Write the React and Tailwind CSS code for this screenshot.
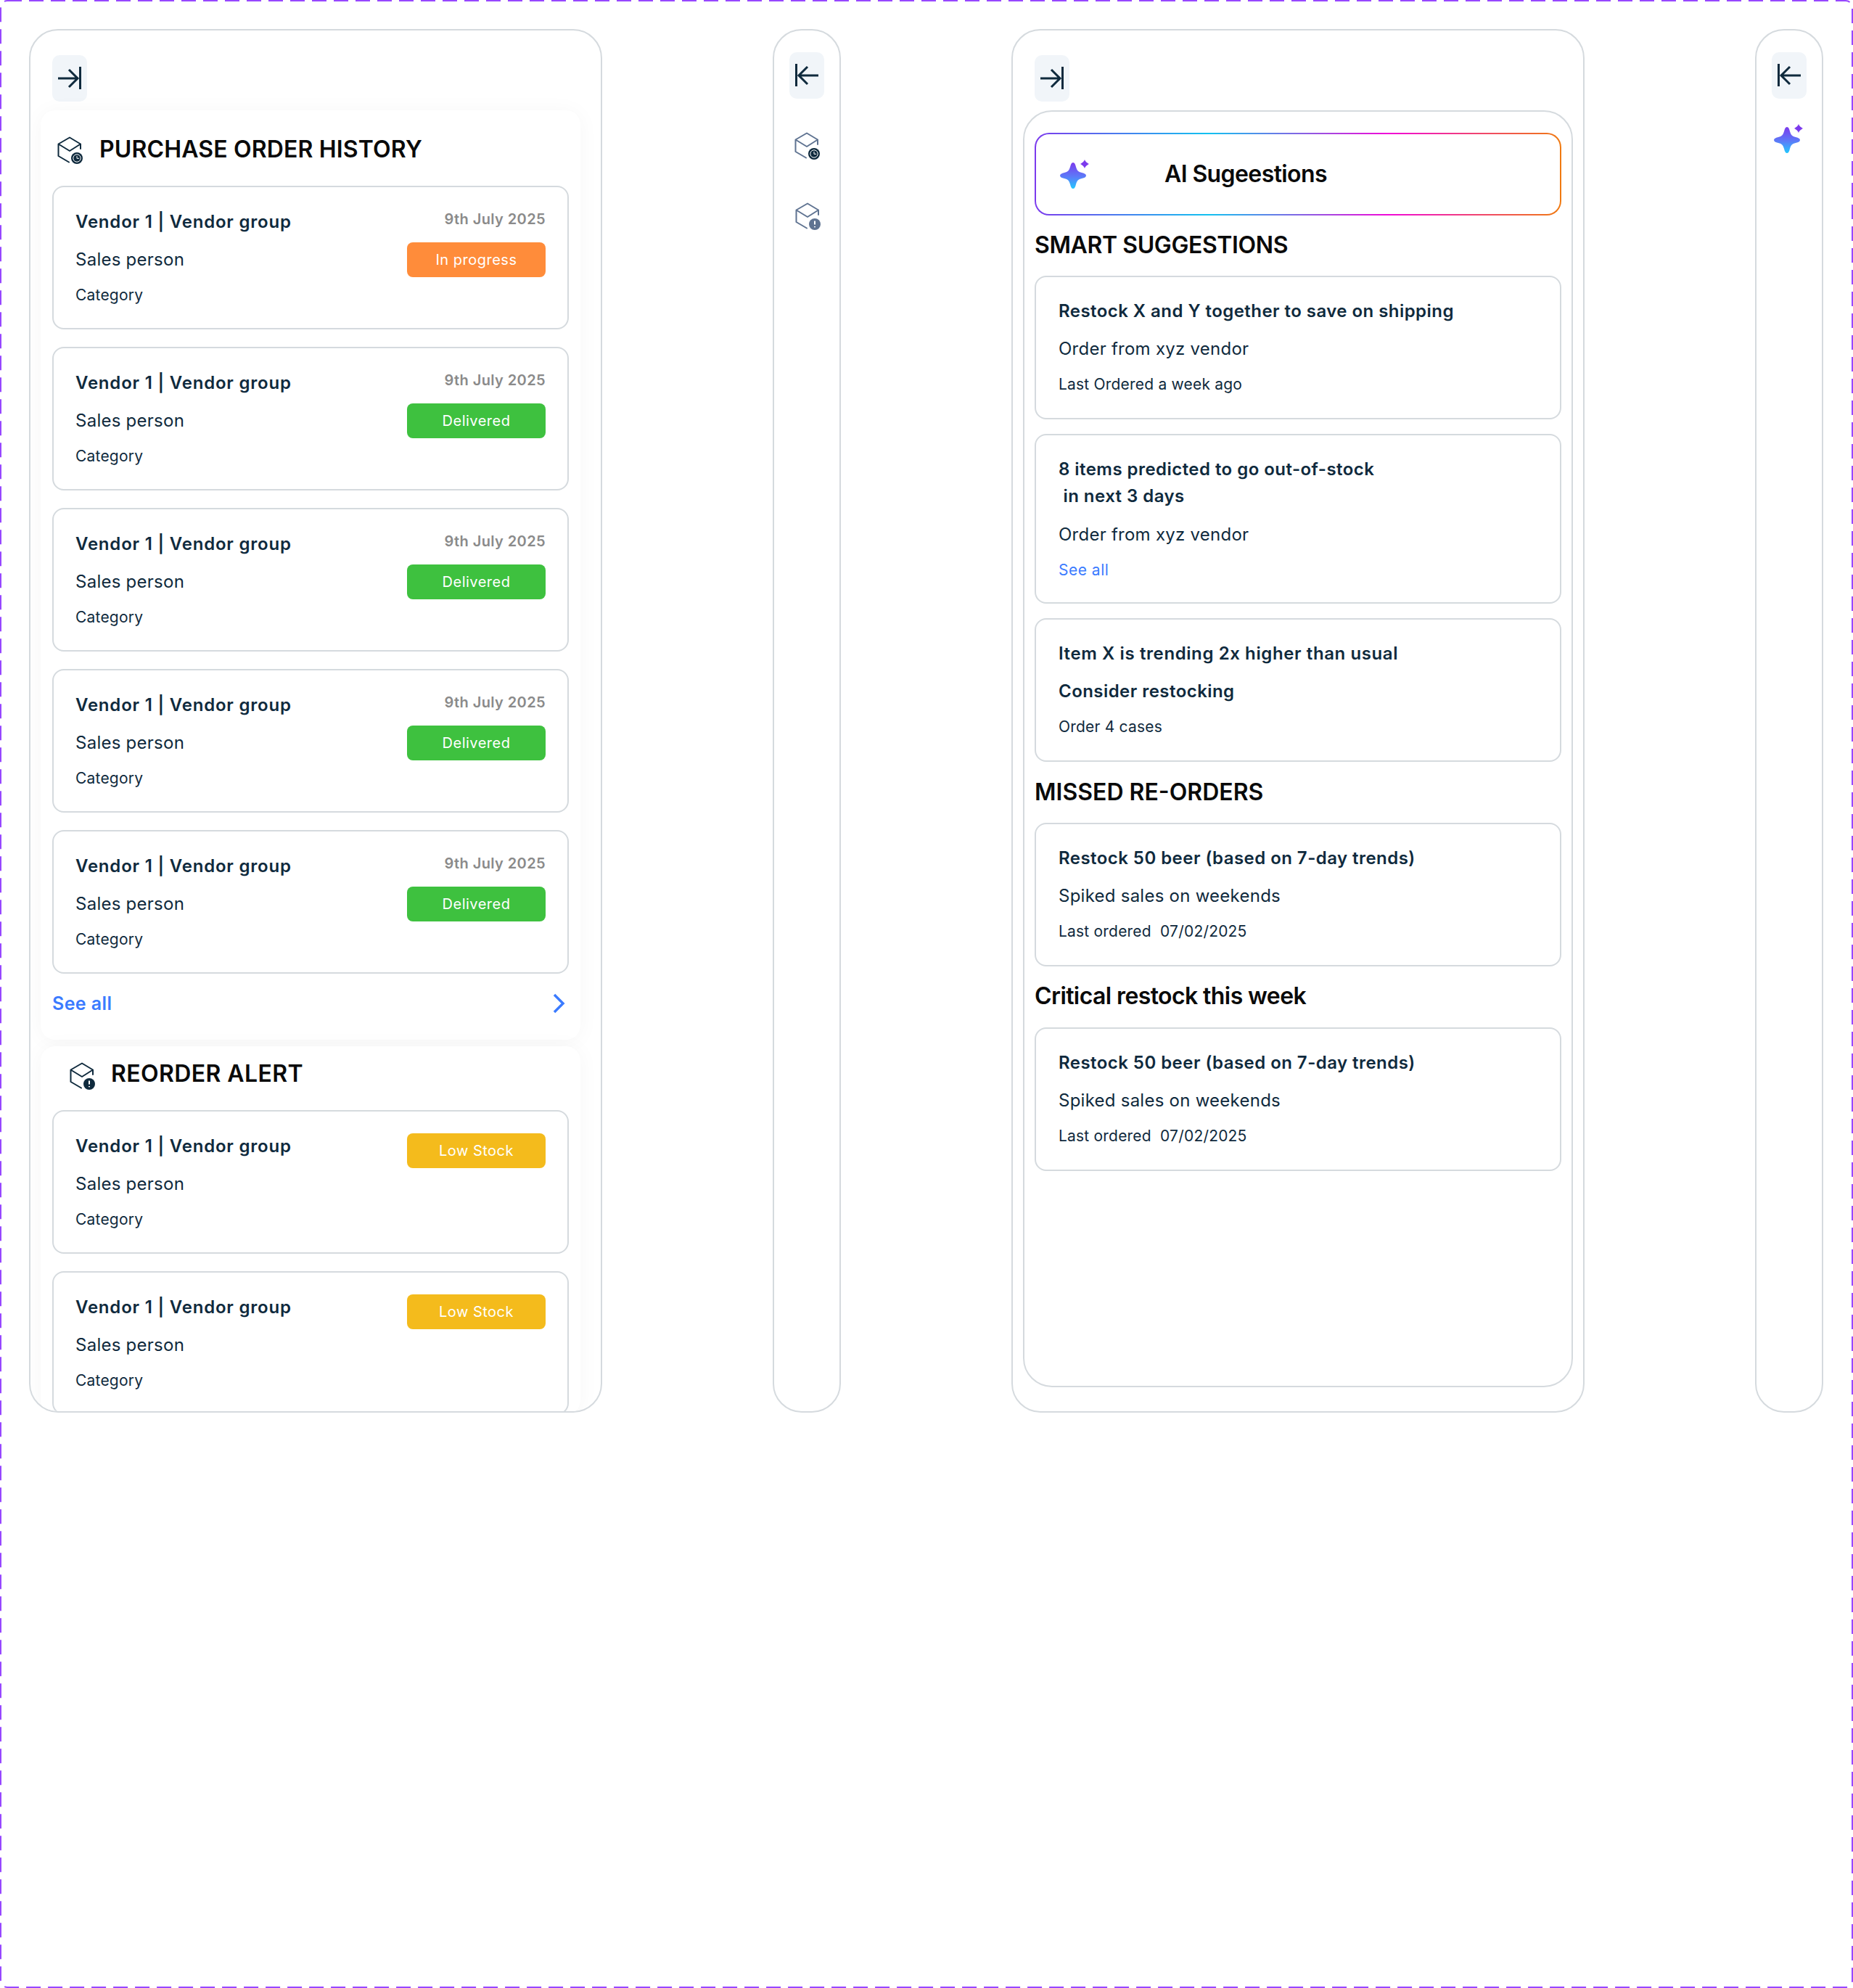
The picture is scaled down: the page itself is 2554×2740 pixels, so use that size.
import React from 'react';

const orders = ['In progress', 'Delivered', 'Delivered', 'Delivered', 'Delivered'];

const ArrowRight = () => (
  <svg width="48" height="64" viewBox="0 0 48 64" fill="none" stroke="#0f2a3d" strokeWidth="3">
    <path d="M8 32H36M23 20L35 32L23 44" />
    <path d="M38.5 16V47" />
  </svg>
);

const ArrowLeft = () => (
  <svg width="48" height="64" viewBox="0 0 48 64" fill="none" stroke="#0f2a3d" strokeWidth="3">
    <path d="M40 32H12M25 20L13 32L25 44" />
    <path d="M9.5 16V47" />
  </svg>
);

const ToggleButton = ({ children }) => (
  <button className="flex h-16 w-12 items-center justify-center rounded-[10px] bg-[#f1f5f9]">{children}</button>
);

// box outline with a small round badge on the lower right corner
const BoxIcon = ({ color, badge, kind }) => (
  <svg width="42" height="40" viewBox="0 0 42 40" fill="none" className="block">
    <path
      d="M17 1.5L32 10.5L17 20L1.5 10.5L17 1.5ZM1.5 10.5V27L16 35.5M32 10.5V17"
      stroke={color}
      strokeWidth="2"
      strokeLinejoin="round"
      strokeLinecap="round"
    />
    <circle cx="27" cy="30" r="8" fill={badge} />
    {kind === 'clock' ? (
      <g stroke="#fff" strokeWidth="1" fill="none">
        <circle cx="27" cy="30" r="5.2" />
        <path d="M27 27V30.3H30" />
      </g>
    ) : (
      <path d="M27 25.5V30.5M27 33V34.2" stroke="#fff" strokeWidth="2" />
    )}
  </svg>
);

const Sparkle = () => (
  <svg width="42" height="40" viewBox="0 -4 42 40">
    <defs>
      <linearGradient id="sparkle-fill" x1="0" y1="0" x2="0" y2="1">
        <stop offset="0" stopColor="#7c3aed" />
        <stop offset="0.55" stopColor="#5b7cf8" />
        <stop offset="1" stopColor="#22c8ff" />
      </linearGradient>
    </defs>
    <path
      fill="url(#sparkle-fill)"
      d="M18 0C20 0 21 2 22 6C23.5 11 25 13 30 14C34 15 36 16 36 18C36 20 34 21 30 22C25 23 23.5 25 22 30C21 34 20 36 18 36C16 36 15 34 14 30C12.5 25 11 23 6 22C2 21 0 20 0 18C0 16 2 15 6 14C11 13 12.5 11 14 6C15 2 16 0 18 0Z"
    />
    <path fill="#7c3aed" d="M34 -4C35 -1.5 36 -0.5 40 2C36 4.5 35 5.5 34 8C33 5.5 32 4.5 28 2C32 -0.5 33 -1.5 34 -4Z" />
  </svg>
);

const Badge = ({ label, color }) => (
  <span className={`flex h-12 w-[191px] items-center justify-center rounded-lg text-[20px] tracking-[0.5px] text-white ${color}`}>{label}</span>
);

const OrderCard = ({ date, label, color }) => (
  <div className="flex h-[198px] shrink-0 justify-between rounded-2xl border-2 border-[#d5dade] px-[30px]">
    <div className="flex flex-col gap-[19px] pt-[31px] text-[#0f2a3d]">
      <p className="text-[24px] leading-[34px] font-semibold tracking-[0.8px]">Vendor 1 | Vendor group</p>
      <p className="text-[24px] leading-[32px] tracking-[0.25px]">Sales person</p>
      <p className="text-[21px] leading-[27px] tracking-[0.2px]">Category</p>
    </div>
    <div className={`flex flex-col items-end gap-[18px] ${date ? 'pt-[31px]' : 'pt-[30px]'}`}>
      {date && <p className="text-[20px] leading-[27px] font-semibold tracking-[0.4px] text-[#8a8a8a]">9th July 2025</p>}
      <Badge label={label} color={color} />
    </div>
  </div>
);

const SuggestionCard = ({ children, height }) => (
  <div className={`flex shrink-0 flex-col rounded-2xl border-2 border-[#d5dade] px-[31px] pt-[30px] text-[#0f2a3d] ${height}`}>
    {children}
  </div>
);

const CardTitle = ({ children }) => <p className="text-[24px] leading-[34px] font-semibold tracking-[0.45px]">{children}</p>;
const CardBody = ({ children }) => <p className="mt-[19px] text-[24px] leading-[32px] tracking-[0.25px]">{children}</p>;
const CardNote = ({ children }) => <p className="mt-[19px] text-[21px] leading-[27px] tracking-[0.2px]">{children}</p>;

const SectionTitle = ({ children, tracking }) => (
  <h2 className={`text-[32px] leading-[44px] font-semibold text-[#0a0a0a] ${tracking}`}>{children}</h2>
);

const Panel = ({ wide, children }) => (
  <div className={`h-[1907px] shrink-0 overflow-hidden rounded-[40px] border-2 border-[#d5dade] bg-white ${wide ? 'w-[790px]' : 'w-[94px]'}`}>
    {children}
  </div>
);

const App = () => {
  return (
    <div className="relative h-[2740px] w-[2554px] bg-white font-['Inter',sans-serif]">
      {/* dashed frame around the whole section */}
      <svg className="pointer-events-none absolute inset-0" width="2554" height="2740" fill="none">
        <rect x="1" y="1" width="2552" height="2738" rx="9" stroke="#9747ff" strokeWidth="2" strokeDasharray="20 10" />
      </svg>

      <div className="flex items-start gap-[235px] px-10 pt-10">
        <Panel wide>
          <div className="flex flex-col pt-[34px] pl-[30px]">
            <ToggleButton>
              <ArrowRight />
            </ToggleButton>
          </div>
          <div className="mt-3 ml-[14px] flex w-[744px] flex-col gap-[9px]">
            <section className="flex h-[1281px] flex-col rounded-[20px] bg-white px-4 shadow-[0_2px_30px_rgba(0,0,0,0.04)]">
              <div className="mt-[10px] mb-[6px] flex h-[88px] shrink-0 items-center gap-[16px] pl-[7px]">
                <div className="mt-1">
                  <BoxIcon color="#0f2a3d" badge="#0f2a3d" kind="clock" />
                </div>
                <SectionTitle tracking="tracking-[0.15px]">PURCHASE ORDER HISTORY</SectionTitle>
              </div>
              <div className="flex flex-col gap-6">
                {orders.map((status, i) => (
                  <OrderCard
                    key={i}
                    date
                    label={status}
                    color={status === 'Delivered' ? 'bg-[#3ec13f]' : 'bg-[#ff8c3a]'}
                  />
                ))}
              </div>
              <div className="mt-[25px] flex items-center justify-between pr-[4px]">
                <span className="text-[25px] leading-[32px] font-semibold tracking-[0.4px] text-[#3b7bff]">See all</span>
                <svg width="20" height="28" viewBox="0 0 20 28" fill="none" stroke="#3b7bff" strokeWidth="3.5">
                  <path d="M4 2L16 14L4 26" />
                </svg>
              </div>
            </section>
            <section className="flex flex-col rounded-[20px] bg-white px-4 shadow-[0_2px_30px_rgba(0,0,0,0.04)]">
              <div className="mb-3 flex h-[76px] shrink-0 items-center gap-[15px] pl-[24px]">
                <div className="mt-2">
                  <BoxIcon color="#0f2a3d" badge="#0f2a3d" kind="alert" />
                </div>
                <SectionTitle tracking="tracking-[0.4px]">REORDER ALERT</SectionTitle>
              </div>
              <div className="flex flex-col gap-6">
                <OrderCard label="Low Stock" color="bg-[#f4bb1c]" />
                <OrderCard label="Low Stock" color="bg-[#f4bb1c]" />
              </div>
            </section>
          </div>
        </Panel>

        <Panel>
          <div className="flex flex-col items-center pt-[30px]">
            <ToggleButton>
              <ArrowLeft />
            </ToggleButton>
            <div className="mt-[46px] pl-[8px]">
              <BoxIcon color="#5f7391" badge="#0f2a3d" kind="clock" />
            </div>
            <div className="mt-[57px] pl-[10px]">
              <BoxIcon color="#5f7391" badge="#5f7391" kind="alert" />
            </div>
          </div>
        </Panel>

        <Panel wide>
          <div className="pt-[34px] pl-[30px]">
            <ToggleButton>
              <ArrowRight />
            </ToggleButton>
          </div>
          <div className="mx-[14px] mt-[12px] h-[1760px] rounded-[40px] border-2 border-[#d5dade] px-[14px] pt-[29px]">
            <div className="rounded-[20px] bg-[linear-gradient(90deg,#7c3aed,#12c2f0_33%,#f00ad8_67%,#f07a10)] p-[2px]">
              <div className="flex h-[110px] items-center rounded-[18px] bg-white pl-[33px]">
                <Sparkle />
                <span className="ml-[102px] text-[32px] font-semibold tracking-[-0.6px] text-[#0a0a0a]">AI Sugeestions</span>
              </div>
            </div>

            <div className="mt-[19px] mb-5">
              <SectionTitle tracking="tracking-[-0.4px]">SMART SUGGESTIONS</SectionTitle>
            </div>
            <div className="flex flex-col gap-5">
              <SuggestionCard height="h-[198px]">
                <CardTitle>Restock X and Y together to save on shipping</CardTitle>
                <CardBody>Order from xyz vendor</CardBody>
                <CardNote>Last Ordered a week ago</CardNote>
              </SuggestionCard>
              <SuggestionCard height="h-[234px]">
                <p className="-mt-[2px] text-[24px] leading-[37px] font-semibold tracking-[0.45px] whitespace-pre">{'8 items predicted to go out-of-stock\n in next 3 days'}</p>
                <CardBody>Order from xyz vendor</CardBody>
                <p className="mt-[19px] text-[21px] leading-[27px] tracking-[0.5px] text-[#3b7bff]">See all</p>
              </SuggestionCard>
              <SuggestionCard height="h-[198px]">
                <p className="text-[24px] leading-[34px] font-semibold tracking-[0.6px]">Item X is trending 2x higher than usual</p>
                <p className="mt-[19px] text-[24px] leading-[32px] font-semibold tracking-[0.45px]">Consider restocking</p>
                <CardNote>Order 4 cases</CardNote>
              </SuggestionCard>
            </div>

            <div className="mt-5 mb-5">
              <SectionTitle>MISSED RE-ORDERS</SectionTitle>
            </div>
            <SuggestionCard height="h-[198px]">
              <CardTitle>Restock 50 beer (based on 7-day trends)</CardTitle>
              <CardBody>Spiked sales on weekends</CardBody>
              <CardNote>Last ordered&nbsp; 07/02/2025</CardNote>
            </SuggestionCard>

            <div className="mt-[19px] mb-[21px]">
              <SectionTitle tracking="tracking-[-0.6px]">Critical restock this week</SectionTitle>
            </div>
            <SuggestionCard height="h-[198px]">
              <CardTitle>Restock 50 beer (based on 7-day trends)</CardTitle>
              <CardBody>Spiked sales on weekends</CardBody>
              <CardNote>Last ordered&nbsp; 07/02/2025</CardNote>
            </SuggestionCard>
          </div>
        </Panel>

        <Panel>
          <div className="flex flex-col items-center pt-[30px]">
            <ToggleButton>
              <ArrowLeft />
            </ToggleButton>
            <div className="mt-[35px]">
              <Sparkle />
            </div>
          </div>
        </Panel>
      </div>
    </div>
  );
};

export default App;
